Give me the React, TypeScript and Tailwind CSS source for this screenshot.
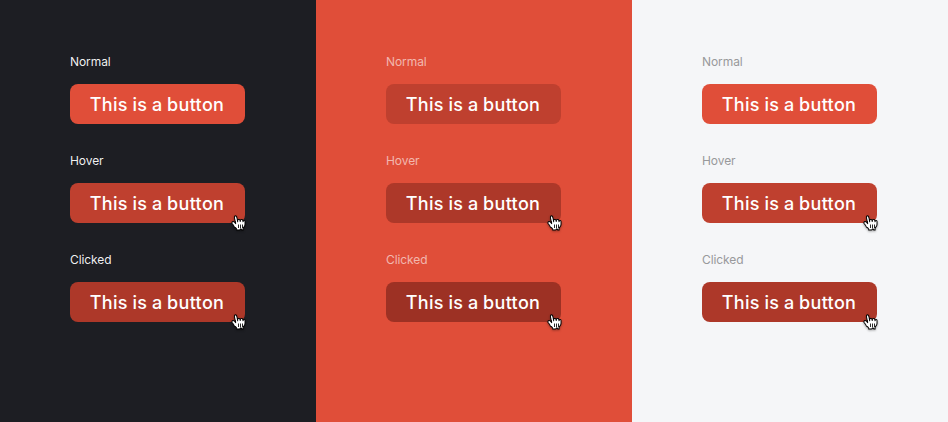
const HAND =
  "m11.3 20.4c-.3-.4-.6-1.1-1.2-2-.3-.5-1.2-1.5-1.5-1.9-.2-.4-.2-.6-.1-1 .1-.6.7-1.1 1.4-1.1.5 0 1 .4 1.4.7.2.2.5.6.7.8.2.2.2.3.4.5.2.3.3.5.2.1-.1-.5-.2-1.3-.4-2.1-.1-.6-.2-.7-.3-1.1-.1-.5-.2-.8-.3-1.3-.1-.3-.2-1.1-.3-1.5-.1-.5-.1-1.4.3-1.8.3-.3.9-.4 1.3-.2.5.3.8 1 .9 1.3.2.5.4 1.2.5 2 .2 1 .5 2.5.5 2.8 0-.4-.1-1.1 0-1.5.1-.3.3-.7.7-.8.3-.1.6-.1.9-.1.3.1.6.3.8.5.4.6.4 1.9.4 1.8.1-.4.1-1.2.3-1.6.1-.2.5-.4.7-.5.3-.1.7-.1 1 0 .2 0 .6.3.7.5.2.3.3 1.3.4 1.7 0 .1.1-.4.3-.7.4-.6 1.8-.8 1.9.6 0 .7 0 .6 0 1.1 0 .5 0 .8 0 1.2 0 .4-.1 1.3-.2 1.7-.1.3-.4 1-.7 1.4 0 0-1.1 1.2-1.2 1.8-.1.6-.1.6-.1 1 0 .4.1.9.1.9s-.8.1-1.2 0c-.4-.1-.9-.8-1-1.1-.2-.3-.5-.3-.7 0-.2.4-.7 1.1-1.1 1.1-.7.1-2.1 0-3.1 0 0 0 .2-1-.2-1.4-.3-.3-.8-.8-1.1-1.1z";

function Pointer() {
  return (
    <svg
      className="absolute left-[161px] top-[32px] h-[17px] w-[16px] overflow-visible drop-shadow-[0_1px_1px_rgba(0,0,0,0.35)]"
      viewBox="0 0 16 17"
    >
      <path d={HAND} transform="translate(-6.8 -6.9) scale(.91 .93)" fill="white" stroke="black" strokeWidth="1.1" strokeLinejoin="round" />
      <path d="M7.5 9.5V13M9.5 9.5V13M11.5 9.5V13" fill="none" stroke="black" strokeWidth=".85" />
    </svg>
  );
}

function Column({ bg, label, colors }: { bg: string; label: string; colors: string[] }) {
  return (
    <section className={`flex w-[316px] flex-col gap-[29px] pl-[70px] pt-[54px] ${bg}`}>
      {["Normal", "Hover", "Clicked"].map((name, i) => (
        <div key={name} className="flex h-[70px] flex-col">
          <div className={`h-[30px] text-[12px] leading-[16px] tracking-[-0.08px] ${label}`}>{name}</div>
          <div className="relative w-[175px]">
            <button
              className={`block h-[40px] w-[175px] whitespace-nowrap rounded-[8px] pr-px pt-px text-[18px] font-medium leading-[39px] tracking-[0.34px] [word-spacing:-0.6px] text-white ${colors[i]}`}
            >
              This is a button
            </button>
            {i > 0 && <Pointer />}
          </div>
        </div>
      ))}
    </section>
  );
}

export default function App() {
  return (
    <main className="flex h-[422px] w-[948px] overflow-hidden font-['Inter',sans-serif] antialiased">
      <Column bg="bg-[#1d1e23]" label="text-white/95" colors={["bg-[#e04e39]", "bg-[#bf402f]", "bg-[#ad3829]"]} />
      <Column bg="bg-[#e04e39]" label="text-white/60" colors={["bg-[#bf402f]", "bg-[#ad3829]", "bg-[#9d3124]"]} />
      <Column bg="bg-[#f5f6f8]" label="text-[#98999b]" colors={["bg-[#e04e39]", "bg-[#bf402f]", "bg-[#ad3829]"]} />
    </main>
  );
}
